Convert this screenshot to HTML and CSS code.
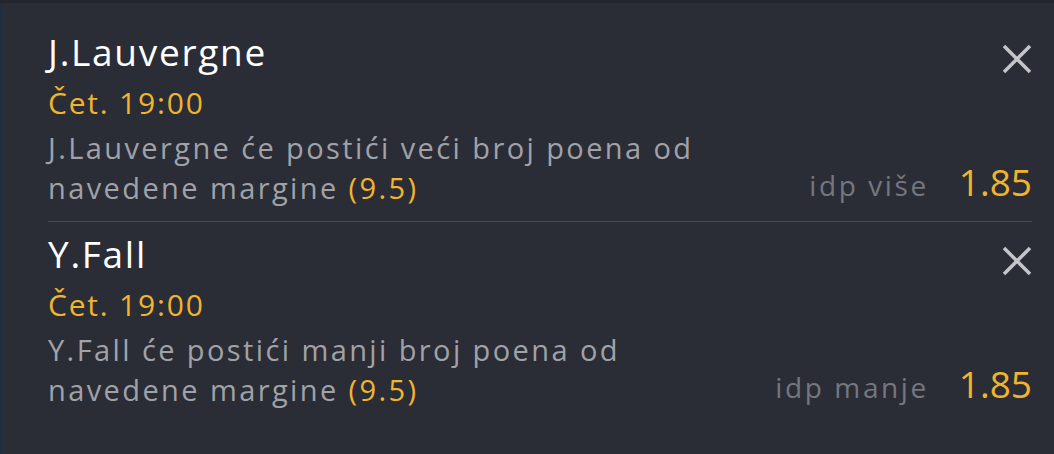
FILE: index.html
```html
<!DOCTYPE html>
<html lang="sr">
<head>
  <meta charset="UTF-8" />
  <meta name="viewport" content="width=device-width, initial-scale=1.0" />
  <title>Tiket</title>
  <link rel="stylesheet" href="styles.css">
</head>
<body>
  <div class="slip">
    <div class="bet">
      <div class="bet-info">
        <div class="player">J.Lauvergne</div>
        <div class="time">Čet. 19:00</div>
        <div class="desc">J.Lauvergne će postići veći broj poena od navedene margine <span class="margin">(9.5)</span></div>
      </div>
      <div class="bet-side">
        <button class="btn-remove" aria-label="Ukloni">
          <svg viewBox="0 0 30 30" width="30" height="30"><path d="M2 2 L28 28 M28 2 L2 28" /></svg>
        </button>
        <div class="odds-row">
          <span class="pick">idp više</span>
          <span class="odds">1.85</span>
        </div>
      </div>
    </div>

    <div class="bet">
      <div class="bet-info">
        <div class="player">Y.Fall</div>
        <div class="time">Čet. 19:00</div>
        <div class="desc">Y.Fall će postići manji broj poena od navedene margine <span class="margin">(9.5)</span></div>
      </div>
      <div class="bet-side">
        <button class="btn-remove" aria-label="Ukloni">
          <svg viewBox="0 0 30 30" width="30" height="30"><path d="M2 2 L28 28 M28 2 L2 28" /></svg>
        </button>
        <div class="odds-row">
          <span class="pick">idp manje</span>
          <span class="odds">1.85</span>
        </div>
      </div>
    </div>
  </div>
</body>
</html>
```

FILE: styles.css
```css
:root {
  --bg: #2a2d36;
  --yellow: #f2b42c;
  --text-muted: #a0a2a8;
  --text-dim: #74777e;
  --divider: #474a52;
}

html, body {
  height: 100%;
}

body {
  margin: 0;
  font-family: "Open Sans", Lato, sans-serif;
  background:
    linear-gradient(to bottom, #24262d 0, #24262d 3px, transparent 3px),
    linear-gradient(to right, #1c3040 0, var(--bg) 5px);
  background-color: var(--bg);
  color: #fff;
}

.slip {
  padding: 20px 22px 0 48px;
}

.bet {
  display: grid;
  grid-template-columns: 1fr auto;
  padding: 7px 0 13px;
  border-bottom: 1px solid var(--divider);
}

.bet:last-child {
  border-bottom: none;
}

.player {
  font-size: 37px;
  line-height: 50px;
  letter-spacing: 1.7px;
  color: #fff;
}

.time {
  font-size: 30px;
  line-height: 50px;
  letter-spacing: 1.8px;
  padding-top: 1px;
  color: var(--yellow);
}

.desc {
  font-size: 29px;
  line-height: 40px;
  letter-spacing: 2.4px;
  color: var(--text-muted);
  max-width: 690px;
}

.margin {
  color: var(--yellow);
}

.bet-side {
  display: flex;
  flex-direction: column;
  justify-content: space-between;
  align-items: flex-end;
}

.btn-remove {
  background: none;
  border: none;
  padding: 0;
  margin-top: 17px;
  width: 30px;
  height: 30px;
  cursor: pointer;
}

.btn-remove svg {
  display: block;
}

.btn-remove path {
  stroke: #c4c5c8;
  stroke-width: 3.5;
  fill: none;
}

.odds-row {
  display: flex;
  align-items: baseline;
  gap: 30px;
  line-height: 40px;
  padding-bottom: 3px;
}

.pick {
  font-size: 28px;
  letter-spacing: 2.6px;
  color: var(--text-dim);
}

.odds {
  font-size: 37px;
  color: var(--yellow);
}
```
